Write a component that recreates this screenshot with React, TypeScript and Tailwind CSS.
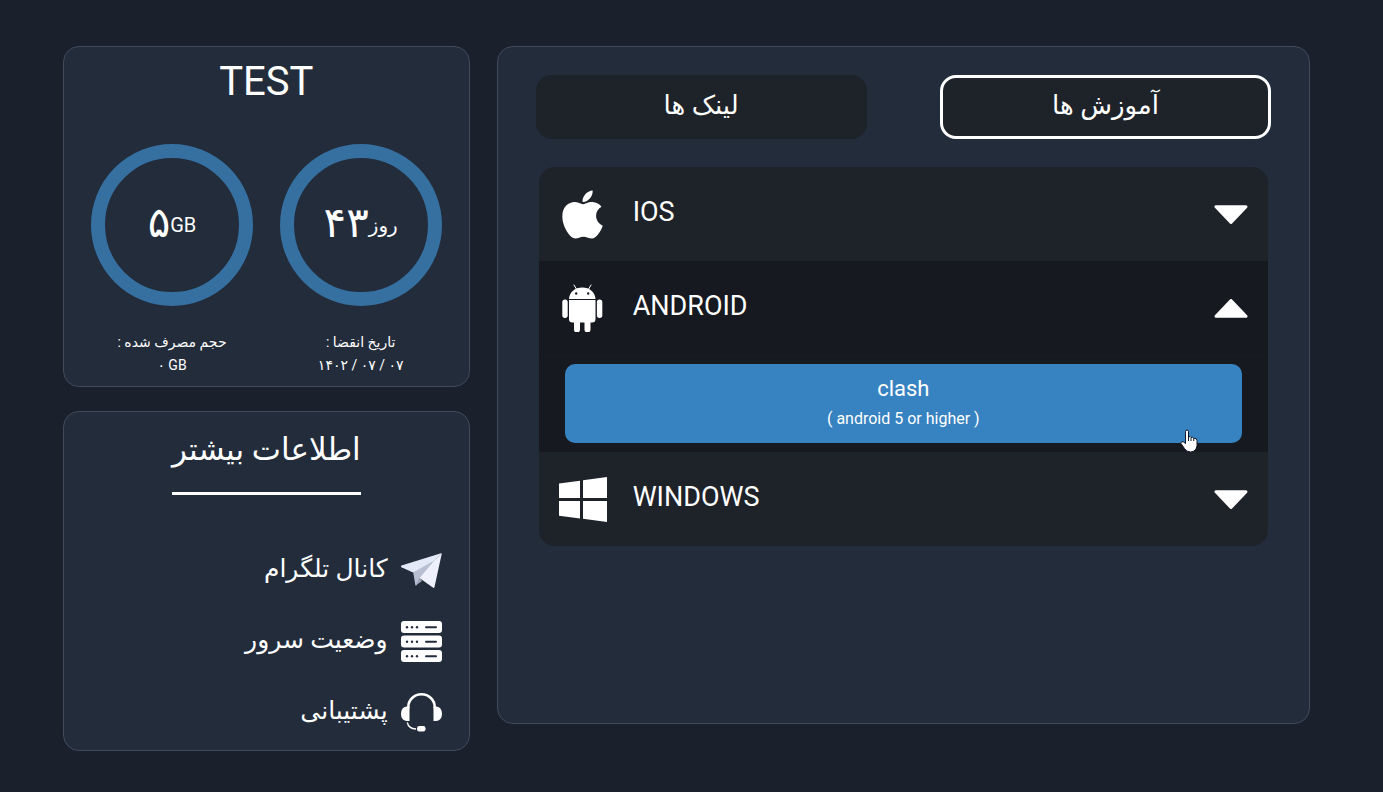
import { useState } from "react";
import type { ReactNode } from "react";
import { FaApple } from "react-icons/fa";

function AndroidIcon() {
  return (
    <svg viewBox="0 0 41 48" className="h-12 w-[41px]" fill="white" aria-hidden="true">
      <path d="M12 1l3 5M29 1l-3 5" stroke="white" strokeWidth="1" strokeLinecap="round" />
      <path fillRule="evenodd" d="M7 15C7.500 8 13 3.500 20.300 3.500S33 8 33.500 15ZM14.200 8.300a1.200 1.200 0 1 0 0 2.400a1.200 1.200 0 0 0 0-2.400ZM26.200 8.300a1.200 1.200 0 1 0 0 2.400a1.200 1.200 0 0 0 0-2.400Z" />
      <path d="M7 16h26.500v19a3.500 3.500 0 0 1-3.500 3.500h-1.500v7a2.900 2.900 0 0 1-6 0v-7h-4.500v7a2.900 2.900 0 0 1-6 0v-7h-1.500A3.500 3.500 0 0 1 7 35Z" />
      <rect x="0.300" y="15.500" width="5.400" height="18.500" rx="2.700" />
      <rect x="34.900" y="15.500" width="5.400" height="18.500" rx="2.700" />
    </svg>
  );
}

function WindowsIcon() {
  return (
    <svg viewBox="0 0 48 45" className="h-[45px] w-12" fill="white" aria-hidden="true">
      <path d="M0 6.500L21 3.700V21H0ZM24 3.300L48 0V21H24ZM0 24H21V41.500L0 38.700ZM24 24H48V45L24 41.800Z" />
    </svg>
  );
}

function PlaneIcon() {
  return (
    <svg viewBox="0 0 41 35" className="h-[35px] w-[41px]" aria-hidden="true">
      <path d="M12 18L35 5L19 25L15.500 32.300Q14.700 33 14.300 32Z" fill="#b9bfd2" />
      <path d="M19 25L14.800 32.500L21 28Z" fill="#9fa6bd" />
      <path d="M0.500 12.600L40 0.200Q41 0 40.500 1L32.500 8L12 19.500L0.500 14.300Q-0.500 13.300 0.500 12.600Z" fill="#e4e9f7" />
      <path d="M40.800 0.500L33.500 34Q33 35.500 31.800 34.600L18.500 25L32.500 8Z" fill="#eef1fb" />
    </svg>
  );
}

function ServerIcon() {
  return (
    <svg viewBox="0 0 41 41" className="size-[41px]" aria-hidden="true">
      {[0, 14.500, 29].map((y) => (
        <g key={y}>
          <rect y={y} width="41" height="12" rx="3" fill="white" />
          <path d={`M25 ${y + 6.300}h10`} stroke="#232c3b" strokeWidth="2" strokeLinecap="round" />
          <g fill="#232c3b">
            <circle cx="6" cy={y + 6.300} r="1.200" />
            <circle cx="11" cy={y + 6.300} r="1.200" />
            <circle cx="16" cy={y + 6.300} r="1.200" />
          </g>
        </g>
      ))}
    </svg>
  );
}

function HeadsetIcon() {
  return (
    <svg viewBox="0 0 41 39" className="h-[39px] w-[41px]" aria-hidden="true">
      <path d="M7.300 15.500V14a13.200 12.700 0 0 1 26.400 0v1.500" fill="none" stroke="white" strokeWidth="2.500" />
      <path d="M8.500 13.500V28H5.500Q0 27 0 20.800T5.500 13.500ZM32.500 13.500V28H35.500Q41 27 41 20.800T35.500 13.500Z" fill="white" />
      <path d="M6.300 29.500Q7.500 35.500 15 36" fill="none" stroke="white" strokeWidth="1.300" />
      <rect x="16" y="33" width="8.500" height="5.500" rx="2.300" fill="white" />
    </svg>
  );
}

function HandPointer() {
  return (
    <svg viewBox="0 0 18 24" className="pointer-events-none absolute right-11 -bottom-[10px] h-6 w-[18px]" aria-hidden="true">
      <path
        d="M5.500 2.500Q5.500 1 7 1T8.500 2.500V8Q10.500 7 11 8.500Q13 7.800 13.700 9.300Q17 9 17 11.500V16.500Q16.500 22.500 10.500 23Q6.500 23 4.500 19.500L1 14.500Q0.500 13 2 12.700T5.500 14.500Z"
        fill="white"
        stroke="#111827"
        strokeWidth="1"
      />
      <path d="M8.500 8v4M11 8.800V12M13.700 9.500V12" stroke="#111827" strokeWidth="1" />
    </svg>
  );
}

function Arrow({ up }: { up: boolean }) {
  return (
    <svg viewBox="0 0 34 19" className={up ? "h-[19px] w-[34px]" : "h-[19px] w-[34px] rotate-180"} aria-hidden="true">
      <path d="M17 1.500L32 17.300H2Z" fill="white" stroke="white" strokeWidth="3" strokeLinejoin="round" />
    </svg>
  );
}

const card = "rounded-2xl border border-[#414b5b] bg-[#232c3b]";

function Gauge({ value, unit, label, detail }: { value: string; unit: string; label: string; detail: string }) {
  return (
    <div className="flex flex-col items-center">
      <div className="flex size-[162px] items-center justify-center rounded-full border-[14px] border-[#3570a1]" dir="ltr">
        <span className="pb-1 text-[42px] leading-10">{value}</span>
        <span className="text-xl">{unit}</span>
      </div>
      <p className="mt-[25px] text-center text-sm leading-[23px]">
        {label}
        <br />
        <span dir="ltr">{detail}</span>
      </p>
    </div>
  );
}

function InfoLink({ icon, children }: { icon: ReactNode; children: ReactNode }) {
  return (
    <a href="#" className="flex h-[71px] items-center gap-[13px] text-[25px]">
      {icon}
      <span className="pb-1">{children}</span>
    </a>
  );
}

function Platform({ icon, name, open, onToggle, children }: { icon: ReactNode; name: string; open: boolean; onToggle: () => void; children?: ReactNode }) {
  return (
    <section className={open ? "bg-[#16191f]" : "bg-[#1e2229]"}>
      <button type="button" aria-expanded={open} onClick={onToggle} className="flex h-[94px] w-full items-center px-5 text-[27px]">
        <span className="flex w-12 justify-center">{icon}</span>
        <span className="ml-[26px] pb-1">{name}</span>
        <span className="ml-auto">
          <Arrow up={open} />
        </span>
      </button>
      {open && children && <div className="border-t border-[#1b1c22] px-[26px] pt-2 pb-[9px]">{children}</div>}
    </section>
  );
}

export default function App() {
  const [tab, setTab] = useState("learn");
  const [open, setOpen] = useState("ANDROID");
  const toggle = (name: string) => setOpen(open === name ? "" : name);
  const tabBase = "h-16 w-[45%] rounded-2xl bg-[#1e2229] pb-1 text-[26px] border-[3px]";

  return (
    <main className="grid min-h-screen grid-cols-[1fr_2fr] items-start gap-[27px] bg-[#1a202c] pt-[46px] pr-[73px] pb-10 pl-[63px] font-['Roboto','DejaVu_Sans',sans-serif] text-white">
      <div className="flex flex-col gap-6" dir="rtl">
        <section className={`${card} h-[341px] px-[27px] pt-[5px]`}>
          <h1 className="text-center text-[40px] leading-[60px]">TEST</h1>
          <div className="mt-8 flex justify-between">
            <Gauge value="۴۳" unit="روز" label="تاریخ انقضا :" detail="۱۴۰۲ / ۰۷ / ۰۷" />
            <Gauge value="۵" unit="GB" label="حجم مصرف شده :" detail="۰ GB" />
          </div>
        </section>
        <section className={`${card} h-[340px] px-[27px]`}>
          <h2 className="mx-auto w-fit border-b-[3px] border-white pt-3 pb-4 text-[31px] leading-[52px]">اطلاعات بیشتر</h2>
          <nav className="mt-10 flex flex-col">
            <InfoLink icon={<PlaneIcon />}>کانال تلگرام</InfoLink>
            <InfoLink icon={<ServerIcon />}>وضعیت سرور</InfoLink>
            <InfoLink icon={<HeadsetIcon />}>پشتیبانی</InfoLink>
          </nav>
        </section>
      </div>

      <section className={`${card} min-h-[678px] px-[38px] pt-7`}>
        <div className="flex justify-between">
          <button type="button" onClick={() => setTab("links")} className={`${tabBase} ${tab === "links" ? "border-white" : "border-transparent"}`}>
            لینک ها
          </button>
          <button type="button" onClick={() => setTab("learn")} className={`${tabBase} ${tab === "learn" ? "border-white" : "border-transparent"}`}>
            آموزش ها
          </button>
        </div>
        <div className="mx-[3px] mt-7 overflow-hidden rounded-2xl">
          <Platform icon={<FaApple className="size-[55px] shrink-0" aria-hidden="true" />} name="IOS" open={open === "IOS"} onToggle={() => toggle("IOS")} />
          <Platform icon={<AndroidIcon />} name="ANDROID" open={open === "ANDROID"} onToggle={() => toggle("ANDROID")}>
            <button type="button" className="relative flex h-[79px] w-full flex-col items-center justify-center rounded-[10px] bg-[#3782c0]">
              <span className="text-[22px] leading-[30px]">clash</span>
              <span className="text-base leading-[30px]">( android 5 or higher )</span>
              <HandPointer />
            </button>
          </Platform>
          <Platform icon={<WindowsIcon />} name="WINDOWS" open={open === "WINDOWS"} onToggle={() => toggle("WINDOWS")} />
        </div>
      </section>
    </main>
  );
}
